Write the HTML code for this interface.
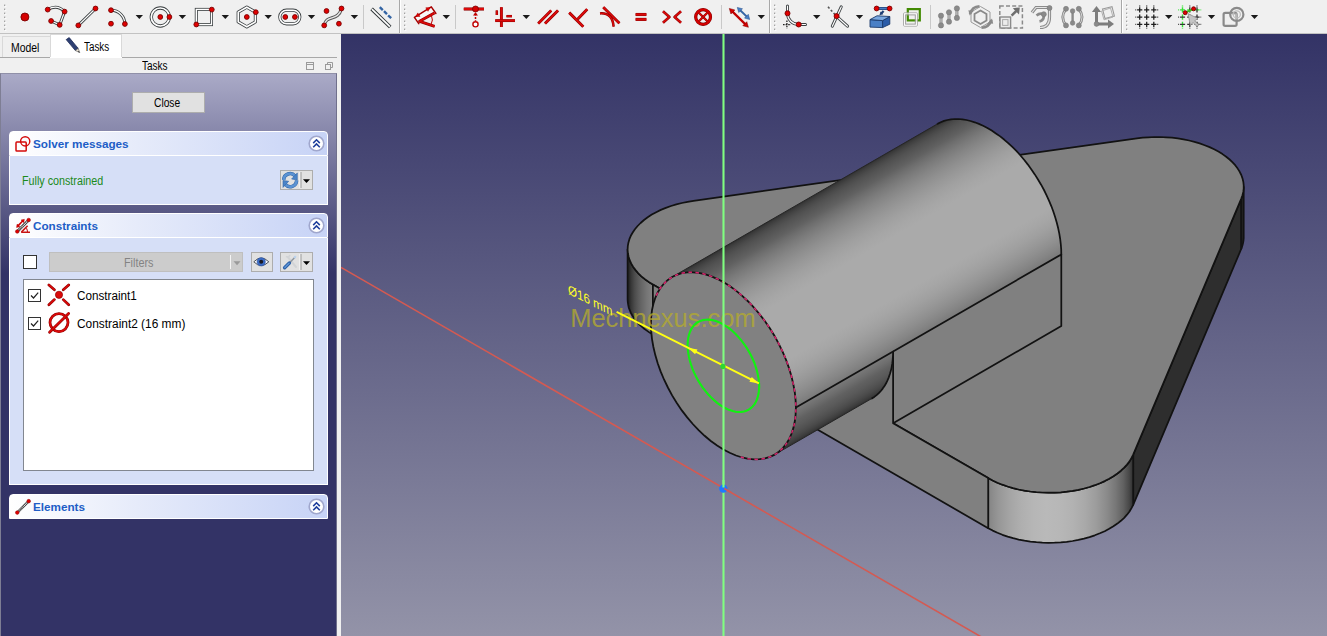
<!DOCTYPE html><html><head><meta charset="utf-8"><title>FreeCAD</title><style>
html,body{margin:0;padding:0;}
body{width:1327px;height:636px;overflow:hidden;background:#f0f0f0;font-family:"Liberation Sans",sans-serif;font-size:11px;color:#000;position:relative;}
.abs{position:absolute;}
#toolbar{left:0;top:0;width:1327px;height:34px;background:#f0f0f0;border-bottom:1px solid #c2c2c2;box-sizing:border-box;}
#tbsvg{left:0;top:0;}
#view{left:341px;top:34px;width:986px;height:602px;background:linear-gradient(#333366,#9393a8);overflow:hidden;}
#left{left:0;top:34px;width:341px;height:602px;background:#f0f0f0;}
.tab{position:absolute;box-sizing:border-box;border:1px solid #d9d9d9;border-bottom:none;font-size:12px;}
#tabline{left:0;top:23px;width:337px;height:1px;background:#a8a8a8;}
#panel{left:0;top:39px;width:337px;height:563px;background:linear-gradient(#aaaac7,#333366 35.5%,#333366);box-sizing:border-box;border-left:1px solid #7e7e94;border-right:1px solid #70708c;border-top:1px solid #9090a8;}
.hdr{position:absolute;left:9px;width:319px;height:25px;box-sizing:border-box;border:1px solid #fff;background:linear-gradient(90deg,#ffffff,#e6ebfa 40%,#c7d3f6);border-radius:4px 4px 0 0;font-weight:bold;color:#215dc6;font-size:11.5px;}
.hdr span{position:absolute;left:24px;top:6px;letter-spacing:-0.1px;white-space:nowrap;}
.body{position:absolute;left:9px;width:319px;box-sizing:border-box;background:#d6dff7;border:1px solid #ffffff;border-top:none;}
.btn{position:absolute;box-sizing:border-box;background:#e1e1e1;border:1px solid #adadad;}
.t{position:absolute;white-space:nowrap;line-height:12px;transform-origin:0 0;display:block;}
.chev{position:absolute;right:2px;top:3px;}
</style></head><body>
<div id="toolbar" class="abs"></div>
<svg id="tbsvg" class="abs" width="1327" height="33" viewBox="0 0 1327 33"><rect x="4.0" y="4.6" width="1.3" height="1.3" fill="#9a9a9a"/><rect x="5.1" y="5.7" width="1.2" height="1.2" fill="#ffffff"/><rect x="4.0" y="8.6" width="1.3" height="1.3" fill="#9a9a9a"/><rect x="5.1" y="9.7" width="1.2" height="1.2" fill="#ffffff"/><rect x="4.0" y="12.6" width="1.3" height="1.3" fill="#9a9a9a"/><rect x="5.1" y="13.7" width="1.2" height="1.2" fill="#ffffff"/><rect x="4.0" y="16.6" width="1.3" height="1.3" fill="#9a9a9a"/><rect x="5.1" y="17.7" width="1.2" height="1.2" fill="#ffffff"/><rect x="4.0" y="20.6" width="1.3" height="1.3" fill="#9a9a9a"/><rect x="5.1" y="21.7" width="1.2" height="1.2" fill="#ffffff"/><rect x="4.0" y="24.6" width="1.3" height="1.3" fill="#9a9a9a"/><rect x="5.1" y="25.7" width="1.2" height="1.2" fill="#ffffff"/><rect x="4.0" y="28.6" width="1.3" height="1.3" fill="#9a9a9a"/><rect x="5.1" y="29.7" width="1.2" height="1.2" fill="#ffffff"/><circle cx="24.9" cy="17" r="4" fill="#d40000" stroke="#7a0000" stroke-width="0.9"/><path d="M47.7 9.6 Q57 4 64.6 11.6 L59.7 24.9 L51.1 21" fill="none" stroke="#3a3f41" stroke-width="3.0" stroke-linecap="round"/><path d="M47.7 9.6 Q57 4 64.6 11.6 L59.7 24.9 L51.1 21" fill="none" stroke="#ffffff" stroke-width="1.2" stroke-linecap="round"/><circle cx="47.7" cy="9.6" r="2.4" fill="#e00000" stroke="#7a0000" stroke-width="0.9"/><circle cx="64.6" cy="11.6" r="2.4" fill="#e00000" stroke="#7a0000" stroke-width="0.9"/><circle cx="59.7" cy="24.9" r="2.4" fill="#e00000" stroke="#7a0000" stroke-width="0.9"/><circle cx="51.1" cy="21.0" r="2.4" fill="#e00000" stroke="#7a0000" stroke-width="0.9"/><path d="M78.3 25.4 L95.5 8.5" fill="none" stroke="#3a3f41" stroke-width="3.0" stroke-linecap="round"/><path d="M78.3 25.4 L95.5 8.5" fill="none" stroke="#ffffff" stroke-width="1.2" stroke-linecap="round"/><circle cx="78.3" cy="25.4" r="2.4" fill="#e00000" stroke="#7a0000" stroke-width="0.9"/><circle cx="95.5" cy="8.5" r="2.4" fill="#e00000" stroke="#7a0000" stroke-width="0.9"/><path d="M111 10.2 A13.8 13.8 0 0 1 124.9 24" fill="none" stroke="#3a3f41" stroke-width="3.0" stroke-linecap="round"/><path d="M111 10.2 A13.8 13.8 0 0 1 124.9 24" fill="none" stroke="#ffffff" stroke-width="1.2" stroke-linecap="round"/><circle cx="111.0" cy="10.2" r="2.4" fill="#e00000" stroke="#7a0000" stroke-width="0.9"/><circle cx="124.9" cy="24.0" r="2.4" fill="#e00000" stroke="#7a0000" stroke-width="0.9"/><circle cx="111.0" cy="23.7" r="2.4" fill="#e00000" stroke="#7a0000" stroke-width="0.9"/><path d="M135.6 15.0 h7.4 l-3.7 4 Z" fill="#1a1a1a"/><circle cx="160.3" cy="17" r="9" fill="none" stroke="#3a3f41" stroke-width="3.3"/><circle cx="160.3" cy="17" r="9" fill="none" stroke="#fff" stroke-width="1.7"/><circle cx="160.3" cy="17.0" r="2.4" fill="#e00000" stroke="#7a0000" stroke-width="0.9"/><circle cx="169.4" cy="17.0" r="2.4" fill="#e00000" stroke="#7a0000" stroke-width="0.9"/><path d="M178.7 15.0 h7.4 l-3.7 4 Z" fill="#1a1a1a"/><rect x="196.3" y="9.4" width="15.2" height="15.2" fill="none" stroke="#3a3f41" stroke-width="3"/><rect x="196.3" y="9.4" width="15.2" height="15.2" fill="none" stroke="#fff" stroke-width="1.4"/><circle cx="211.8" cy="9.6" r="2.4" fill="#e00000" stroke="#7a0000" stroke-width="0.9"/><circle cx="196.3" cy="24.5" r="2.4" fill="#e00000" stroke="#7a0000" stroke-width="0.9"/><path d="M221.6 15.0 h7.4 l-3.7 4 Z" fill="#1a1a1a"/><path d="M246.8 7.2 L255.4 12.1 L255.4 21.9 L246.8 26.8 L238.2 21.9 L238.2 12.1 Z" fill="none" stroke="#3a3f41" stroke-width="3.2" stroke-linejoin="round"/><path d="M246.8 7.2 L255.4 12.1 L255.4 21.9 L246.8 26.8 L238.2 21.9 L238.2 12.1 Z" fill="none" stroke="#fff" stroke-width="1.6"/><circle cx="246.8" cy="17.0" r="2.4" fill="#e00000" stroke="#7a0000" stroke-width="0.9"/><circle cx="255.8" cy="12.2" r="2.4" fill="#e00000" stroke="#7a0000" stroke-width="0.9"/><path d="M264.5 15.0 h7.4 l-3.7 4 Z" fill="#1a1a1a"/><rect x="279.8" y="10.2" width="20" height="13.6" rx="6.8" fill="none" stroke="#3a3f41" stroke-width="3.2"/><rect x="279.8" y="10.2" width="20" height="13.6" rx="6.8" fill="none" stroke="#fff" stroke-width="1.6"/><circle cx="285.3" cy="17.0" r="2.4" fill="#e00000" stroke="#7a0000" stroke-width="0.9"/><circle cx="294.9" cy="17.0" r="2.4" fill="#e00000" stroke="#7a0000" stroke-width="0.9"/><path d="M307.8 15.0 h7.4 l-3.7 4 Z" fill="#1a1a1a"/><path d="M324.2 25.4 C326 14 338 22 341.5 8.5" fill="none" stroke="#555" stroke-width="3.2" stroke-linecap="round"/><path d="M324.2 25.4 C326 14 338 22 341.5 8.5" fill="none" stroke="#e8e8e8" stroke-width="1.3"/><circle cx="326.5" cy="11.0" r="2.4" fill="#e00000" stroke="#7a0000" stroke-width="0.9"/><circle cx="341.5" cy="8.5" r="2.4" fill="#e00000" stroke="#7a0000" stroke-width="0.9"/><circle cx="324.2" cy="25.4" r="2.4" fill="#e00000" stroke="#7a0000" stroke-width="0.9"/><circle cx="338.9" cy="23.7" r="2.4" fill="#e00000" stroke="#7a0000" stroke-width="0.9"/><path d="M350.7 15.0 h7.4 l-3.7 4 Z" fill="#1a1a1a"/><rect x="363.0" y="5" width="1" height="24" fill="#c9c9c9"/><path d="M371.6 8.9 L390.2 27" stroke="#2e3436" stroke-width="3.6" fill="none"/><path d="M371.9 9.2 L389.9 26.7" stroke="#fff" stroke-width="1.7" fill="none"/><path d="M379.8 7.2 L392 19" stroke="#3465a4" stroke-width="2.4" stroke-dasharray="4.2 1.6" fill="none"/><rect x="399.0" y="0" width="1" height="33" fill="#a8a8a8"/><rect x="400.0" y="0" width="1" height="33" fill="#ffffff"/><rect x="404.0" y="4.6" width="1.3" height="1.3" fill="#9a9a9a"/><rect x="405.1" y="5.7" width="1.2" height="1.2" fill="#ffffff"/><rect x="404.0" y="8.6" width="1.3" height="1.3" fill="#9a9a9a"/><rect x="405.1" y="9.7" width="1.2" height="1.2" fill="#ffffff"/><rect x="404.0" y="12.6" width="1.3" height="1.3" fill="#9a9a9a"/><rect x="405.1" y="13.7" width="1.2" height="1.2" fill="#ffffff"/><rect x="404.0" y="16.6" width="1.3" height="1.3" fill="#9a9a9a"/><rect x="405.1" y="17.7" width="1.2" height="1.2" fill="#ffffff"/><rect x="404.0" y="20.6" width="1.3" height="1.3" fill="#9a9a9a"/><rect x="405.1" y="21.7" width="1.2" height="1.2" fill="#ffffff"/><rect x="404.0" y="24.6" width="1.3" height="1.3" fill="#9a9a9a"/><rect x="405.1" y="25.7" width="1.2" height="1.2" fill="#ffffff"/><rect x="404.0" y="28.6" width="1.3" height="1.3" fill="#9a9a9a"/><rect x="405.1" y="29.7" width="1.2" height="1.2" fill="#ffffff"/><path d="M414.4 17.3 L431.3 6.9 L435.8 13.3 L418.6 23.5 Z" fill="#f8f8f8"/><path d="M418.8 23.7 L414.4 17.3 L431.3 6.9 L435.9 13.5" fill="none" stroke="#a80000" stroke-width="1.5" stroke-linejoin="round" stroke-linecap="round"/><path d="M415.6 16.6 l4.4 -0.2 l-2.2 -3.5 Z M430.2 7.6 l-4.4 0.2 l2.2 3.5 Z" fill="#e00000" stroke="#a80000" stroke-width="0.5"/><path d="M434.4 13 L419.6 21.3 L434.6 26.4" fill="none" stroke="#8e0000" stroke-width="2.8" stroke-linecap="butt" stroke-linejoin="round"/><path d="M434.4 13 L419.6 21.3 L434.6 26.4" fill="none" stroke="#dc0a0a" stroke-width="1.7" stroke-linecap="butt" stroke-linejoin="round"/><path d="M431.4 15.4 Q433.6 20 431 24.6" stroke="#c00000" stroke-width="1" fill="none"/><path d="M442.6 15.0 h7.4 l-3.7 4 Z" fill="#1a1a1a"/><rect x="455.0" y="5" width="1" height="24" fill="#c9c9c9"/><path d="M463.8 9 H484" fill="none" stroke="#8e0000" stroke-width="3.1" stroke-linecap="butt" stroke-linejoin="round"/><path d="M463.8 9 H484" fill="none" stroke="#dc0a0a" stroke-width="2.0" stroke-linecap="butt" stroke-linejoin="round"/><circle cx="475.5" cy="9" r="3" fill="#d40000" stroke="#7a0000" stroke-width="0.8"/><path d="M475.5 13.5 V21" stroke="#c00000" stroke-width="1.5" stroke-dasharray="2 1.4" fill="none"/><path d="M473 15.5 L475.5 12.2 L478 15.5 Z" fill="#c00000"/><circle cx="475.5" cy="24.3" r="2.6" fill="#fff" stroke="#c00000" stroke-width="1.4"/><path d="M501.4 7.2 V27" fill="none" stroke="#8e0000" stroke-width="2.9" stroke-linecap="butt" stroke-linejoin="round"/><path d="M501.4 7.2 V27" fill="none" stroke="#dc0a0a" stroke-width="1.8" stroke-linecap="butt" stroke-linejoin="round"/><path d="M495.2 20.6 H515" fill="none" stroke="#8e0000" stroke-width="2.9" stroke-linecap="butt" stroke-linejoin="round"/><path d="M495.2 20.6 H515" fill="none" stroke="#dc0a0a" stroke-width="1.8" stroke-linecap="butt" stroke-linejoin="round"/><path d="M496.8 10.4 V15" fill="none" stroke="#8e0000" stroke-width="2.5" stroke-linecap="butt" stroke-linejoin="round"/><path d="M496.8 10.4 V15" fill="none" stroke="#dc0a0a" stroke-width="1.4" stroke-linecap="butt" stroke-linejoin="round"/><path d="M506.4 16.2 H512" fill="none" stroke="#8e0000" stroke-width="2.5" stroke-linecap="butt" stroke-linejoin="round"/><path d="M506.4 16.2 H512" fill="none" stroke="#dc0a0a" stroke-width="1.4" stroke-linecap="butt" stroke-linejoin="round"/><path d="M522.6 15.0 h7.4 l-3.7 4 Z" fill="#1a1a1a"/><path d="M538.2 23.6 L551.2 10.4" fill="none" stroke="#8e0000" stroke-width="2.9" stroke-linecap="butt" stroke-linejoin="round"/><path d="M538.2 23.6 L551.2 10.4" fill="none" stroke="#dc0a0a" stroke-width="1.8" stroke-linecap="butt" stroke-linejoin="round"/><path d="M545 23.6 L558 10.4" fill="none" stroke="#8e0000" stroke-width="2.9" stroke-linecap="butt" stroke-linejoin="round"/><path d="M545 23.6 L558 10.4" fill="none" stroke="#dc0a0a" stroke-width="1.8" stroke-linecap="butt" stroke-linejoin="round"/><path d="M569.2 12.6 L583.3 26.7" fill="none" stroke="#8e0000" stroke-width="2.9" stroke-linecap="butt" stroke-linejoin="round"/><path d="M569.2 12.6 L583.3 26.7" fill="none" stroke="#dc0a0a" stroke-width="1.8" stroke-linecap="butt" stroke-linejoin="round"/><path d="M577.6 19.2 L587.2 9.2" fill="none" stroke="#8e0000" stroke-width="2.9" stroke-linecap="butt" stroke-linejoin="round"/><path d="M577.6 19.2 L587.2 9.2" fill="none" stroke="#dc0a0a" stroke-width="1.8" stroke-linecap="butt" stroke-linejoin="round"/><path d="M603.3 7.2 L619.4 23.3" fill="none" stroke="#8e0000" stroke-width="2.9" stroke-linecap="butt" stroke-linejoin="round"/><path d="M603.3 7.2 L619.4 23.3" fill="none" stroke="#dc0a0a" stroke-width="1.8" stroke-linecap="butt" stroke-linejoin="round"/><path d="M600 13.4 Q612.5 12.5 613.6 26.6" fill="none" stroke="#8e0000" stroke-width="2.5" stroke-linecap="butt" stroke-linejoin="round"/><path d="M600 13.4 Q612.5 12.5 613.6 26.6" fill="none" stroke="#dc0a0a" stroke-width="1.4" stroke-linecap="butt" stroke-linejoin="round"/><path d="M635.6 14.5 H646.4" fill="none" stroke="#8e0000" stroke-width="3.1" stroke-linecap="butt" stroke-linejoin="round"/><path d="M635.6 14.5 H646.4" fill="none" stroke="#dc0a0a" stroke-width="2.0" stroke-linecap="butt" stroke-linejoin="round"/><path d="M635.6 19.4 H646.4" fill="none" stroke="#8e0000" stroke-width="3.1" stroke-linecap="butt" stroke-linejoin="round"/><path d="M635.6 19.4 H646.4" fill="none" stroke="#dc0a0a" stroke-width="2.0" stroke-linecap="butt" stroke-linejoin="round"/><path d="M663 11.3 L669.4 17 L663 22.7" fill="none" stroke="#8e0000" stroke-width="2.7" stroke-linecap="butt" stroke-linejoin="round"/><path d="M663 11.3 L669.4 17 L663 22.7" fill="none" stroke="#dc0a0a" stroke-width="1.6" stroke-linecap="butt" stroke-linejoin="round"/><path d="M681 11.3 L674.6 17 L681 22.7" fill="none" stroke="#8e0000" stroke-width="2.7" stroke-linecap="butt" stroke-linejoin="round"/><path d="M681 11.3 L674.6 17 L681 22.7" fill="none" stroke="#dc0a0a" stroke-width="1.6" stroke-linecap="butt" stroke-linejoin="round"/><circle cx="703.1" cy="17" r="7.4" fill="none" stroke="#7a0000" stroke-width="3.2"/><circle cx="703.1" cy="17" r="7.4" fill="none" stroke="#d40000" stroke-width="2.2"/><path d="M698.6 12.5 L707.6 21.5" fill="none" stroke="#8e0000" stroke-width="2.3" stroke-linecap="butt" stroke-linejoin="round"/><path d="M698.6 12.5 L707.6 21.5" fill="none" stroke="#dc0a0a" stroke-width="1.2" stroke-linecap="butt" stroke-linejoin="round"/><path d="M707.6 12.5 L698.6 21.5" fill="none" stroke="#8e0000" stroke-width="2.3" stroke-linecap="butt" stroke-linejoin="round"/><path d="M707.6 12.5 L698.6 21.5" fill="none" stroke="#dc0a0a" stroke-width="1.2" stroke-linecap="butt" stroke-linejoin="round"/><rect x="721.0" y="5" width="1" height="24" fill="#c9c9c9"/><path d="M731.5 10.6 L746.2 25.1" stroke="#c00000" stroke-width="2.2" fill="none"/><path d="M729.3 8.4 l5.6 1.6 l-4 4 Z M748.4 27.3 l-5.6 -1.6 l4 -4 Z" fill="#d40000" stroke="#7a0000" stroke-width="0.5"/><path d="M739.4 9.5 L747.6 17.4" stroke="#3465a4" stroke-width="2" fill="none"/><path d="M737.3 7.4 l5.2 1.4 l-3.8 3.8 Z M749.7 19.5 l-5.2 -1.4 l3.8 -3.8 Z" fill="#4a7fc4" stroke="#204a87" stroke-width="0.5"/><path d="M757.6 15.0 h7.4 l-3.7 4 Z" fill="#1a1a1a"/><rect x="769.0" y="0" width="1" height="33" fill="#a8a8a8"/><rect x="770.0" y="0" width="1" height="33" fill="#ffffff"/><rect x="774.0" y="4.6" width="1.3" height="1.3" fill="#9a9a9a"/><rect x="775.1" y="5.7" width="1.2" height="1.2" fill="#ffffff"/><rect x="774.0" y="8.6" width="1.3" height="1.3" fill="#9a9a9a"/><rect x="775.1" y="9.7" width="1.2" height="1.2" fill="#ffffff"/><rect x="774.0" y="12.6" width="1.3" height="1.3" fill="#9a9a9a"/><rect x="775.1" y="13.7" width="1.2" height="1.2" fill="#ffffff"/><rect x="774.0" y="16.6" width="1.3" height="1.3" fill="#9a9a9a"/><rect x="775.1" y="17.7" width="1.2" height="1.2" fill="#ffffff"/><rect x="774.0" y="20.6" width="1.3" height="1.3" fill="#9a9a9a"/><rect x="775.1" y="21.7" width="1.2" height="1.2" fill="#ffffff"/><rect x="774.0" y="24.6" width="1.3" height="1.3" fill="#9a9a9a"/><rect x="775.1" y="25.7" width="1.2" height="1.2" fill="#ffffff"/><rect x="774.0" y="28.6" width="1.3" height="1.3" fill="#9a9a9a"/><rect x="775.1" y="29.7" width="1.2" height="1.2" fill="#ffffff"/><path d="M787.5 6 V12" fill="none" stroke="#3a3f41" stroke-width="3.0" stroke-linecap="round"/><path d="M787.5 6 V12" fill="none" stroke="#ffffff" stroke-width="1.2" stroke-linecap="round"/><path d="M787.5 13.3 A11.2 11.2 0 0 0 798.7 24.5" fill="none" stroke="#3a3f41" stroke-width="3.0" stroke-linecap="round"/><path d="M787.5 13.3 A11.2 11.2 0 0 0 798.7 24.5" fill="none" stroke="#ffffff" stroke-width="1.2" stroke-linecap="round"/><path d="M799 24.5 H805.5" fill="none" stroke="#3a3f41" stroke-width="3.0" stroke-linecap="round"/><path d="M799 24.5 H805.5" fill="none" stroke="#ffffff" stroke-width="1.2" stroke-linecap="round"/><circle cx="787.5" cy="13.3" r="2.5" fill="#e00000" stroke="#7a0000" stroke-width="0.9"/><circle cx="798.7" cy="24.5" r="2.5" fill="#e00000" stroke="#7a0000" stroke-width="0.9"/><path d="M786.9 20.5 V28.5 M783 24.7 H791" stroke="#222" stroke-width="1.3" stroke-dasharray="1.6 1" fill="none"/><path d="M813.0 15.0 h7.4 l-3.7 4 Z" fill="#1a1a1a"/><path d="M841.2 6.9 L832.3 26.2" fill="none" stroke="#3a3f41" stroke-width="3.0" stroke-linecap="round"/><path d="M841.2 6.9 L832.3 26.2" fill="none" stroke="#ffffff" stroke-width="1.2" stroke-linecap="round"/><path d="M836.6 16.3 L847.5 26.2" fill="none" stroke="#3a3f41" stroke-width="3.0" stroke-linecap="round"/><path d="M836.6 16.3 L847.5 26.2" fill="none" stroke="#ffffff" stroke-width="1.2" stroke-linecap="round"/><path d="M828 6.8 L835 14.6" stroke="#555" stroke-width="1.6" stroke-dasharray="2.2 2" fill="none"/><circle cx="836.6" cy="16.1" r="2.5" fill="#e00000" stroke="#7a0000" stroke-width="0.9"/><path d="M855.8 15.0 h7.4 l-3.7 4 Z" fill="#1a1a1a"/><path d="M870 19.6 L882.6 20.6 L882.6 27.6 L870 27.1 Z" fill="#4a80c6" stroke="#1b3a6b" stroke-width="0.9" stroke-linejoin="round"/><path d="M882.6 20.6 L889.8 16.5 L889.8 24.2 L882.6 27.6 Z" fill="#2a5ca8" stroke="#1b3a6b" stroke-width="0.9" stroke-linejoin="round"/><path d="M870 19.6 L877 15.8 L889.8 16.5 L882.6 20.6 Z" fill="#7aa8e0" stroke="#1b3a6b" stroke-width="0.9" stroke-linejoin="round"/><path d="M877 8.5 H889.4" stroke="#1f3f75" stroke-width="3"/><path d="M877 8.5 H889.4" stroke="#4a7cc0" stroke-width="1.6"/><path d="M883.6 11 L881.2 13.6" stroke="#1f3f75" stroke-width="2.2"/><path d="M879.4 15.2 l1.2 -3.6 l2.8 2.6 Z" fill="#1f3f75"/><circle cx="876.6" cy="8.5" r="2.4" fill="#e00000" stroke="#7a0000" stroke-width="0.9"/><circle cx="889.6" cy="8.5" r="2.4" fill="#e00000" stroke="#7a0000" stroke-width="0.9"/><rect x="907.8" y="9.1" width="12" height="11.3" fill="none" stroke="#428a02" stroke-width="2.2"/><rect x="903.6" y="12.9" width="13.7" height="13.2" rx="0.8" fill="none" stroke="#a6a6a6" stroke-width="1"/><rect x="904.6" y="13.9" width="11.7" height="11.2" fill="none" stroke="#ffffff" stroke-width="1"/><rect x="905.6" y="14.9" width="9.7" height="9.2" fill="none" stroke="#a0a0a0" stroke-width="1"/><rect x="930.0" y="5" width="1" height="24" fill="#c9c9c9"/><path d="M941.0 15.7 V25.4" stroke="#8a8a8a" stroke-width="3" fill="none"/><path d="M941.0 15.7 V25.4" stroke="#cfcfcf" stroke-width="1" fill="none"/><circle cx="941.0" cy="15.7" r="2.6" fill="#8a8a8a" stroke="#7a7a7a" stroke-width="0.6"/><circle cx="941.0" cy="25.4" r="2.6" fill="#8a8a8a" stroke="#7a7a7a" stroke-width="0.6"/><path d="M949.0 12.3 V21.7" stroke="#8a8a8a" stroke-width="3" fill="none"/><path d="M949.0 12.3 V21.7" stroke="#cfcfcf" stroke-width="1" fill="none"/><circle cx="949.0" cy="12.3" r="2.6" fill="#8a8a8a" stroke="#7a7a7a" stroke-width="0.6"/><circle cx="949.0" cy="21.7" r="2.6" fill="#8a8a8a" stroke="#7a7a7a" stroke-width="0.6"/><path d="M956.9 8.4 V17.9" stroke="#8a8a8a" stroke-width="3" fill="none"/><path d="M956.9 8.4 V17.9" stroke="#cfcfcf" stroke-width="1" fill="none"/><circle cx="956.9" cy="8.4" r="2.6" fill="#8a8a8a" stroke="#7a7a7a" stroke-width="0.6"/><circle cx="956.9" cy="17.9" r="2.6" fill="#8a8a8a" stroke="#7a7a7a" stroke-width="0.6"/><path d="M980.5 6.5 L990 12 L990 22 L980.5 27.5 L971 22 L971 12 Z" fill="none" stroke="#9a9a9a" stroke-width="1"/><path d="M980.5 10.5 L986.5 14 L986.5 20.5 L980.5 24 L974.5 20.5 L974.5 14 Z" fill="none" stroke="#8a8a8a" stroke-width="1.8"/><path d="M970 14 Q972 6.5 979.5 6.2" fill="none" stroke="#8a8a8a" stroke-width="2.6"/><path d="M968.4 10.2 l5.2 0.8 l-4 4.4 Z" fill="#8a8a8a"/><path d="M991.5 20 Q989 27.5 981.5 27.8" fill="none" stroke="#8a8a8a" stroke-width="2.6"/><path d="M993.2 23.8 l-5.2 -0.8 l4 -4.4 Z" fill="#8a8a8a"/><rect x="999.8" y="5.9" width="22.6" height="22.2" fill="none" stroke="#8a8a8a" stroke-width="1.5" stroke-dasharray="4 2.2"/><rect x="1000" y="17" width="10.6" height="11" fill="#ececec" stroke="#8a8a8a" stroke-width="1.4"/><rect x="1002.6" y="19.6" width="5.4" height="5.8" fill="none" stroke="#a8a8a8" stroke-width="1"/><path d="M1011.6 15.6 L1016.4 10.8" stroke="#6e6e6e" stroke-width="2.6"/><path d="M1019.8 7.4 l-7 0.8 l6.2 6.2 Z" fill="#6e6e6e"/><path d="M1032 12.5 L1036 7.5 H1049.5 V17 Q1049.5 27.5 1040 27.5" fill="none" stroke="#8a8a8a" stroke-width="3.2"/><path d="M1032 12.5 L1036 7.5 H1049.5 V17 Q1049.5 27.5 1040 27.5" fill="none" stroke="#e4e4e4" stroke-width="1.2"/><path d="M1036.5 15.5 Q1040 12.5 1043.6 14.4 Q1044.5 20.5 1039.5 21.4" fill="none" stroke="#8a8a8a" stroke-width="2.6"/><circle cx="1049.5" cy="8.0" r="2.5" fill="#8a8a8a" stroke="#7a7a7a" stroke-width="0.6"/><circle cx="1043.8" cy="14.2" r="2.5" fill="#8a8a8a" stroke="#7a7a7a" stroke-width="0.6"/><path d="M1066 9 Q1059.5 17 1066 25.5" fill="none" stroke="#8a8a8a" stroke-width="2.8"/><path d="M1078.8 9 Q1085.3 17 1078.8 25.5" fill="none" stroke="#8a8a8a" stroke-width="2.8"/><path d="M1066 9 Q1059.5 17 1066 25.5 M1078.8 9 Q1085.3 17 1078.8 25.5" fill="none" stroke="#dcdcdc" stroke-width="0.9"/><path d="M1072.6 11 V23" stroke="#8a8a8a" stroke-width="2.4"/><circle cx="1066.0" cy="8.8" r="2.5" fill="#8a8a8a" stroke="#7a7a7a" stroke-width="0.6"/><circle cx="1066.0" cy="25.4" r="2.5" fill="#8a8a8a" stroke="#7a7a7a" stroke-width="0.6"/><circle cx="1078.8" cy="8.8" r="2.5" fill="#8a8a8a" stroke="#7a7a7a" stroke-width="0.6"/><circle cx="1078.8" cy="25.4" r="2.5" fill="#8a8a8a" stroke="#7a7a7a" stroke-width="0.6"/><circle cx="1072.6" cy="11.0" r="2.3" fill="#8a8a8a" stroke="#7a7a7a" stroke-width="0.6"/><circle cx="1072.6" cy="23.0" r="2.3" fill="#8a8a8a" stroke="#7a7a7a" stroke-width="0.6"/><path d="M1096.5 24 V11" stroke="#7d7d7d" stroke-width="3"/><path d="M1096.5 6 l4.6 6 h-9.2 Z" fill="#7d7d7d"/><path d="M1096.5 24 H1108" stroke="#7d7d7d" stroke-width="3"/><path d="M1114 24 l-6 4.6 v-9.2 Z" fill="#7d7d7d"/><path d="M1102.5 9 L1112 6.6 L1114.4 16 L1105 18.6 Z" fill="none" stroke="#9a9a9a" stroke-width="1.1"/><path d="M1101.5 11 L1110.5 8 L1113 17 L1104 19.8 Z" fill="none" stroke="#b0b0b0" stroke-width="1"/><circle cx="1096.5" cy="24.0" r="2.4" fill="#8a8a8a" stroke="#7a7a7a" stroke-width="0.6"/><rect x="1121.0" y="0" width="1" height="33" fill="#a8a8a8"/><rect x="1122.0" y="0" width="1" height="33" fill="#ffffff"/><rect x="1126.0" y="4.6" width="1.3" height="1.3" fill="#9a9a9a"/><rect x="1127.1" y="5.7" width="1.2" height="1.2" fill="#ffffff"/><rect x="1126.0" y="8.6" width="1.3" height="1.3" fill="#9a9a9a"/><rect x="1127.1" y="9.7" width="1.2" height="1.2" fill="#ffffff"/><rect x="1126.0" y="12.6" width="1.3" height="1.3" fill="#9a9a9a"/><rect x="1127.1" y="13.7" width="1.2" height="1.2" fill="#ffffff"/><rect x="1126.0" y="16.6" width="1.3" height="1.3" fill="#9a9a9a"/><rect x="1127.1" y="17.7" width="1.2" height="1.2" fill="#ffffff"/><rect x="1126.0" y="20.6" width="1.3" height="1.3" fill="#9a9a9a"/><rect x="1127.1" y="21.7" width="1.2" height="1.2" fill="#ffffff"/><rect x="1126.0" y="24.6" width="1.3" height="1.3" fill="#9a9a9a"/><rect x="1127.1" y="25.7" width="1.2" height="1.2" fill="#ffffff"/><rect x="1126.0" y="28.6" width="1.3" height="1.3" fill="#9a9a9a"/><rect x="1127.1" y="29.7" width="1.2" height="1.2" fill="#ffffff"/><path d="M1139.7 5.6 V28.4" stroke="#1c1c1c" stroke-width="1.25" stroke-dasharray="0.8 0.9 5.2 2 5.2 2 5.2 0.8 0.7 9" fill="none"/><path d="M1146.7 5.6 V28.4" stroke="#1c1c1c" stroke-width="1.25" stroke-dasharray="0.8 0.9 5.2 2 5.2 2 5.2 0.8 0.7 9" fill="none"/><path d="M1153.8 5.6 V28.4" stroke="#1c1c1c" stroke-width="1.25" stroke-dasharray="0.8 0.9 5.2 2 5.2 2 5.2 0.8 0.7 9" fill="none"/><path d="M1135.4 9.9 H1158.2" stroke="#1c1c1c" stroke-width="1.25" stroke-dasharray="0.8 0.9 5.2 1.8 5.2 1.9 5.2 0.9 0.9 9" fill="none"/><path d="M1135.4 17.1 H1158.2" stroke="#1c1c1c" stroke-width="1.25" stroke-dasharray="0.8 0.9 5.2 1.8 5.2 1.9 5.2 0.9 0.9 9" fill="none"/><path d="M1135.4 24.3 H1158.2" stroke="#1c1c1c" stroke-width="1.25" stroke-dasharray="0.8 0.9 5.2 1.8 5.2 1.9 5.2 0.9 0.9 9" fill="none"/><path d="M1165.0 15.0 h7.4 l-3.7 4 Z" fill="#1a1a1a"/><path d="M1182.5 5.6 V28.4" stroke="#35e435" stroke-width="1.4" stroke-dasharray="0.8 0.9 5.2 2 5.2 2 5.2 0.8 0.7 9" fill="none"/><path d="M1178.2 9.9 H1201.2" stroke="#35e435" stroke-width="1.4" stroke-dasharray="0.8 0.9 5.2 2.1 5.2 2 5.2 0.9 0.8 9" fill="none"/><path d="M1189.8 5.6 V28.4" stroke="#333" stroke-width="1.3" stroke-dasharray="0.8 0.9 5.2 2 5.2 2 5.2 0.8 0.7 9" fill="none"/><path d="M1197.0 5.6 V28.4" stroke="#333" stroke-width="1.3" stroke-dasharray="0.8 0.9 5.2 2 5.2 2 5.2 0.8 0.7 9" fill="none"/><path d="M1178.2 17.1 H1201.2" stroke="#333" stroke-width="1.3" stroke-dasharray="0.8 0.9 5.2 2.1 5.2 2 5.2 0.9 0.8 9" fill="none"/><path d="M1178.2 24.3 H1201.2" stroke="#333" stroke-width="1.3" stroke-dasharray="0.8 0.9 5.2 2.1 5.2 2 5.2 0.9 0.8 9" fill="none"/><path d="M1188 13.6 L1190.4 25.6 L1193 22.4 L1197 26.6 L1198.8 24.8 L1194.6 20.8 L1198 18.6 Z" fill="#c4c4c4" stroke="#8e8e8e" stroke-width="0.8"/><path d="M1185.2 12.7 L1193.6 8.8" stroke="#3fbf1f" stroke-width="2"/><circle cx="1185.2" cy="12.7" r="2.0" fill="#e00000" stroke="#7a0000" stroke-width="0.9"/><circle cx="1193.6" cy="8.8" r="2.0" fill="#e00000" stroke="#7a0000" stroke-width="0.9"/><path d="M1207.8 15.0 h7.4 l-3.7 4 Z" fill="#1a1a1a"/><rect x="1223.6" y="12.8" width="13" height="13" rx="1.6" fill="none" stroke="#8a8a8a" stroke-width="2.2"/><circle cx="1236.8" cy="14.4" r="6.6" fill="none" stroke="#8a8a8a" stroke-width="2.2"/><path d="M1231.5 14 H1236.5 V19.5" fill="none" stroke="#b5b5b5" stroke-width="1.2"/><circle cx="1236.8" cy="14.4" r="3.6" fill="none" stroke="#bdbdbd" stroke-width="1.2"/><path d="M1250.8 15.0 h7.4 l-3.7 4 Z" fill="#1a1a1a"/></svg>
<div id="left" class="abs">
<div class="tab" style="left:2px;top:2px;width:49px;height:21px;background:#f0f0f0;"></div>
<div class="tab" style="left:50px;top:0;width:72px;height:24px;background:#fff;"><svg class="abs" style="left:12px;top:1px" width="20" height="20" viewBox="0 0 20 20"><path d="M3.2 3.6 L6.2 1.6 L15.2 12.4 L12.4 14.6 Z" fill="#2d3f73" stroke="#1d2a55" stroke-width="0.8"/><path d="M12.4 14.6 L15.2 12.4 L16.8 16.6 Z" fill="#e8e0d0" stroke="#555" stroke-width="0.6"/><path d="M15.6 15 L16.8 16.6 L14.9 15.9 Z" fill="#222"/></svg></div>
<div id="tabline" class="abs"></div><div class="abs" style="left:50px;top:23px;width:72px;height:1px;background:#fff"></div>
<svg class="abs" style="left:300px;top:24px" width="40" height="14" viewBox="0 0 40 14"><g fill="none" stroke="#9a9a9a" stroke-width="1"><rect x="6.5" y="4.5" width="7" height="7"/><path d="M6.5 6.5h7"/><rect x="25.5" y="6.5" width="5" height="5" fill="#f0f0f0"/><path d="M27.5 6.5v-2h5v5h-2"/></g></svg>
<div id="panel" class="abs">
<div class="btn" style="left:131px;top:18px;width:73px;height:21px;"></div>
<div class="hdr" style="left:8px;top:57px;"><svg class="abs" style="left:4px;top:2.6px" width="19" height="19" viewBox="0 0 19 19"><rect x="2" y="7.1" width="10.2" height="8.9" rx="0.8" fill="none" stroke="#d40a0a" stroke-width="1.5"/><circle cx="11.2" cy="6.35" r="4.6" fill="none" stroke="#d40a0a" stroke-width="1.4"/></svg><svg class="chev" width="17" height="17" viewBox="0 0 17 17"><circle cx="8.5" cy="8.5" r="7.3" fill="#ffffff" stroke="#a0a7cd" stroke-width="1.6"/><path d="M5.2 8.1 L8.5 4.8 L11.8 8.1 M5.2 12.3 L8.5 9 L11.8 12.3" fill="none" stroke="#1f3f9c" stroke-width="1.6"/></svg></div>
<div class="body" style="left:8px;top:82px;height:49px;">
<div class="btn" style="left:270px;top:14px;width:33px;height:20px;"><svg class="abs" style="left:0;top:0" width="31" height="18" viewBox="0 0 31 18"><g><path d="M2.7 8.9 A6.4 6.4 0 0 1 14 4.9" fill="none" stroke="#2f64a6" stroke-width="3.5"/><path d="M2.7 8.9 A6.4 6.4 0 0 1 14 4.9" fill="none" stroke="#5b93d3" stroke-width="2.6"/><path d="M16.3 1.9 V8.9 L10.6 8 Z" fill="#4a84c8" stroke="#2f64a6" stroke-width="0.6" stroke-linejoin="round"/></g><g transform="rotate(180 9.15 9.15)"><path d="M2.7 8.9 A6.4 6.4 0 0 1 14 4.9" fill="none" stroke="#2f64a6" stroke-width="3.5"/><path d="M2.7 8.9 A6.4 6.4 0 0 1 14 4.9" fill="none" stroke="#5b93d3" stroke-width="2.6"/><path d="M16.3 1.9 V8.9 L10.6 8 Z" fill="#4a84c8" stroke="#2f64a6" stroke-width="0.6" stroke-linejoin="round"/></g><rect x="18.4" y="1" width="1" height="16" fill="#fafafa"/><rect x="19.5" y="1" width="1" height="16" fill="#9c9c9c"/><path d="M22 8.2 h7 l-3.5 3.8 Z" fill="#000"/></svg></div></div>
<div class="hdr" style="left:8px;top:139px;"><svg class="abs" style="left:4px;top:2.6px" width="19" height="19" viewBox="0 0 19 19"><path d="M3.25 14.5 L14.7 3" stroke="#333" stroke-width="2.6"/><path d="M3.25 14.5 L14.7 3" stroke="#fff" stroke-width="1.3" stroke-dasharray="0.9 0.7"/><path d="M4 8.9 L8.9 3.8" stroke="#d00000" stroke-width="1.6"/><path d="M2.5 10.5 l0.6 -3.4 l2.8 2.7 Z M10.4 2.3 l-0.6 3.4 l-2.8 -2.7 Z" fill="#e00000" stroke="#a00000" stroke-width="0.4"/><path d="M7.2 15.25 H16" stroke="#c81414" stroke-width="1.5"/><path d="M7.4 15.1 L13.6 8.8" stroke="#c81414" stroke-width="1.5"/><path d="M12.4 11.2 Q13.6 13 13.5 15" fill="none" stroke="#c81414" stroke-width="1.1"/><circle cx="3.25" cy="14.5" r="1.8" fill="#e00000" stroke="#900000" stroke-width="0.5"/><circle cx="14.7" cy="3" r="1.8" fill="#e00000" stroke="#900000" stroke-width="0.5"/></svg><svg class="chev" width="17" height="17" viewBox="0 0 17 17"><circle cx="8.5" cy="8.5" r="7.3" fill="#ffffff" stroke="#a0a7cd" stroke-width="1.6"/><path d="M5.2 8.1 L8.5 4.8 L11.8 8.1 M5.2 12.3 L8.5 9 L11.8 12.3" fill="none" stroke="#1f3f9c" stroke-width="1.6"/></svg></div>
<div class="body" style="left:8px;top:164px;height:247px;">
<div class="abs" style="left:13px;top:17px;width:14px;height:14px;box-sizing:border-box;border:1px solid #333;background:#fff;"></div>
<div class="abs" style="left:39px;top:14px;width:194px;height:20px;box-sizing:border-box;background:#cccccc;border:1px solid #bfbfbf;color:#838383;font-size:12px;"><div class="abs" style="left:180px;top:2px;width:1px;height:14px;background:#f4f4f4"></div><svg class="abs" style="left:183px;top:8px" width="8" height="5"><path d="M0.5 0.3 H7.5 L4 4.2 Z" fill="#9a9a9a"/></svg></div>
<div class="btn" style="left:241px;top:14px;width:22px;height:20px;"><svg class="abs" style="left:0;top:0" width="20" height="18" viewBox="0 0 20 18"><path d="M1.8 8.8 Q9.2 1.2 16.8 8.8 Q9.2 16.4 1.8 8.8 Z" fill="#fbfcff" stroke="#4d5258" stroke-width="1"/><circle cx="9.2" cy="8.8" r="4.1" fill="#3b6cc6" stroke="#2a4f9a" stroke-width="0.6"/><circle cx="9.2" cy="8.8" r="2" fill="#1a1a22"/></svg></div>
<div class="btn" style="left:270px;top:14px;width:33px;height:20px;"><svg class="abs" style="left:0;top:0" width="31" height="18" viewBox="0 0 31 18"><path d="M6.8 4 L15 14" stroke="#d2d4d6" stroke-width="2" stroke-linecap="round"/><path d="M5 3.4 a2.6 2.6 0 0 0 4 -1.6" fill="none" stroke="#d2d4d6" stroke-width="1.6"/><path d="M8.6 9.8 L14.2 4" stroke="#8e969e" stroke-width="1.5"/><path d="M13.2 5 L14.8 3.2" stroke="#b9d2ee" stroke-width="2"/><path d="M3.6 14.8 L8.4 10" stroke="#2b5fa8" stroke-width="3.4" stroke-linecap="round"/><path d="M3.8 14.4 L8 10.2" stroke="#5f96d6" stroke-width="1.4" stroke-linecap="round"/><rect x="18.4" y="1" width="1" height="16" fill="#fafafa"/><rect x="19.5" y="1" width="1" height="16" fill="#9c9c9c"/><path d="M22 8.2 h7 l-3.5 3.8 Z" fill="#000"/></svg></div>
<div class="abs" style="left:13px;top:41px;width:291px;height:192px;box-sizing:border-box;background:#fff;border:1px solid #828790;">
<div class="abs" style="left:4px;top:9px;width:13px;height:13px;box-sizing:border-box;border:1px solid #333;background:#fff;"><svg class="abs" style="left:0;top:0" width="11" height="11"><path d="M2 5.5 L4.5 8 L9.2 2.6" fill="none" stroke="#222" stroke-width="1.2"/></svg></div>
<div class="abs" style="left:23px;top:3px;"><svg width="24" height="24" viewBox="0 0 24 24"><path d="M1.9 1.9 L7.4 6.8 M21.7 1.9 L16.3 6.8 M1.9 21.8 L7.4 16.6 M21.7 21.8 L16.3 16.6" stroke="#8e0000" stroke-width="2.7" stroke-linecap="round"/><path d="M1.9 1.9 L7.4 6.8 M21.7 1.9 L16.3 6.8 M1.9 21.8 L7.4 16.6 M21.7 21.8 L16.3 16.6" stroke="#dc0a0a" stroke-width="1.5" stroke-linecap="round"/><circle cx="12" cy="11.8" r="3.6" fill="#dc0a0a" stroke="#8e0000" stroke-width="0.7"/></svg></div>
<div class="abs" style="left:4px;top:37px;width:13px;height:13px;box-sizing:border-box;border:1px solid #333;background:#fff;"><svg class="abs" style="left:0;top:0" width="11" height="11"><path d="M2 5.5 L4.5 8 L9.2 2.6" fill="none" stroke="#222" stroke-width="1.2"/></svg></div>
<div class="abs" style="left:23px;top:31px;"><svg width="24" height="24" viewBox="0 0 24 24"><circle cx="12" cy="11.6" r="9" fill="none" stroke="#8e0000" stroke-width="2.8"/><circle cx="12" cy="11.6" r="9" fill="none" stroke="#dc0a0a" stroke-width="1.7"/><path d="M2.6 21.2 L21.6 2.4" stroke="#8e0000" stroke-width="2.8" stroke-linecap="round"/><path d="M2.6 21.2 L21.6 2.4" stroke="#dc0a0a" stroke-width="1.7" stroke-linecap="round"/></svg></div>
</div>
</div>
<div class="hdr" style="left:8px;top:420px;"><svg class="abs" style="left:4px;top:2.6px" width="19" height="19" viewBox="0 0 19 19"><path d="M3.25 14.6 L14.7 3.15" stroke="#333" stroke-width="2.4"/><path d="M3.25 14.6 L14.7 3.15" stroke="#fff" stroke-width="1.2" stroke-dasharray="0.9 0.7"/><circle cx="3.25" cy="14.6" r="1.8" fill="#e00000" stroke="#900000" stroke-width="0.5"/><circle cx="14.7" cy="3.15" r="1.8" fill="#e00000" stroke="#900000" stroke-width="0.5"/></svg><svg class="chev" width="17" height="17" viewBox="0 0 17 17"><circle cx="8.5" cy="8.5" r="7.3" fill="#ffffff" stroke="#a0a7cd" stroke-width="1.6"/><path d="M5.2 8.1 L8.5 4.8 L11.8 8.1 M5.2 12.3 L8.5 9 L11.8 12.3" fill="none" stroke="#1f3f9c" stroke-width="1.6"/></svg></div>
</div>
</div>
<span id="t1" class="t" style="left:11.0px;top:41.64px;font-size:12px;color:#000;transform:scaleX(0.8688);">Model</span>
<span id="t2" class="t" style="left:84.0px;top:41.04px;font-size:12px;color:#000;transform:scaleX(0.8212);">Tasks</span>
<span id="t3" class="t" style="left:141.8px;top:59.74px;font-size:12px;color:#000;transform:scaleX(0.8342);">Tasks</span>
<span id="t4" class="t" style="left:154.1px;top:97.34px;font-size:12px;color:#000;transform:scaleX(0.8538);">Close</span>
<span id="t5" class="t" style="left:33.2px;top:138.22px;font-size:11.5px;font-weight:bold;color:#215dc6;transform:scaleX(1.0172);">Solver messages</span>
<span id="t6" class="t" style="left:22.2px;top:175.44px;font-size:12px;color:#1a8a1a;transform:scaleX(0.8951);">Fully constrained</span>
<span id="t7" class="t" style="left:33.2px;top:220.42px;font-size:11.5px;font-weight:bold;color:#215dc6;transform:scaleX(1.0156);">Constraints</span>
<span id="t8" class="t" style="left:124.1px;top:257.44px;font-size:12px;color:#838383;transform:scaleX(0.9029);">Filters</span>
<span id="t9" class="t" style="left:77.2px;top:290.44px;font-size:12px;color:#000;transform:scaleX(0.9743);">Constraint1</span>
<span id="t10" class="t" style="left:77.2px;top:318.44px;font-size:12px;color:#000;transform:scaleX(0.9911);">Constraint2 (16 mm)</span>
<span id="t11" class="t" style="left:33.2px;top:501.42px;font-size:11.5px;font-weight:bold;color:#215dc6;transform:scaleX(1.0168);">Elements</span>
<div class="abs" style="left:337px;top:34px;width:4px;height:602px;background:#f0f0f0;"></div>
<div id="view" class="abs"><svg class="abs" style="left:-341px;top:-34px" width="1327" height="636" viewBox="0 0 1327 636">
<defs><linearGradient id="gBR" gradientUnits="userSpaceOnUse" x1="988.2" y1="0" x2="1133.2" y2="0"><stop offset="0.000" stop-color="#848484"/><stop offset="0.068" stop-color="#969696"/><stop offset="0.145" stop-color="#a4a4a4"/><stop offset="0.227" stop-color="#afafaf"/><stop offset="0.314" stop-color="#b6b6b6"/><stop offset="0.404" stop-color="#b9b9b9"/><stop offset="0.494" stop-color="#b7b7b7"/><stop offset="0.582" stop-color="#b2b2b2"/><stop offset="0.667" stop-color="#a9a9a9"/><stop offset="0.745" stop-color="#9c9c9c"/><stop offset="0.817" stop-color="#8b8b8b"/><stop offset="0.880" stop-color="#777777"/><stop offset="0.932" stop-color="#616161"/><stop offset="0.972" stop-color="#484848"/><stop offset="1.000" stop-color="#2e2e2e"/></linearGradient><linearGradient id="gBL" gradientUnits="userSpaceOnUse" x1="627.6" y1="0" x2="652.9" y2="0"><stop offset="0.000" stop-color="#282828"/><stop offset="0.005" stop-color="#282828"/><stop offset="0.021" stop-color="#282828"/><stop offset="0.048" stop-color="#282828"/><stop offset="0.086" stop-color="#2c2c2c"/><stop offset="0.133" stop-color="#363636"/><stop offset="0.192" stop-color="#3f3f3f"/><stop offset="0.260" stop-color="#494949"/><stop offset="0.338" stop-color="#525252"/><stop offset="0.426" stop-color="#5b5b5b"/><stop offset="0.523" stop-color="#646464"/><stop offset="0.630" stop-color="#6c6c6c"/><stop offset="0.745" stop-color="#757575"/><stop offset="0.868" stop-color="#7c7c7c"/><stop offset="1.000" stop-color="#848484"/></linearGradient><linearGradient id="gAP" gradientUnits="userSpaceOnUse" x1="1241.3" y1="0" x2="1243.7" y2="0"><stop offset="0.000" stop-color="#2e2e2e"/><stop offset="0.137" stop-color="#2b2b2b"/><stop offset="0.264" stop-color="#282828"/><stop offset="0.382" stop-color="#282828"/><stop offset="0.489" stop-color="#282828"/><stop offset="0.586" stop-color="#282828"/><stop offset="0.672" stop-color="#282828"/><stop offset="0.749" stop-color="#282828"/><stop offset="0.816" stop-color="#282828"/><stop offset="0.872" stop-color="#282828"/><stop offset="0.918" stop-color="#282828"/><stop offset="0.954" stop-color="#282828"/><stop offset="0.979" stop-color="#282828"/><stop offset="0.995" stop-color="#282828"/><stop offset="1.000" stop-color="#282828"/></linearGradient><linearGradient id="gCyl" gradientUnits="userSpaceOnUse" x1="672.1" y1="277.0" x2="774.7" y2="454.6"><stop offset="0.0000" stop-color="#282828"/><stop offset="0.0019" stop-color="#303030"/><stop offset="0.0076" stop-color="#393939"/><stop offset="0.0170" stop-color="#414141"/><stop offset="0.0302" stop-color="#4a4a4a"/><stop offset="0.0468" stop-color="#525252"/><stop offset="0.0670" stop-color="#595959"/><stop offset="0.0904" stop-color="#616161"/><stop offset="0.1170" stop-color="#6e6e6e"/><stop offset="0.1464" stop-color="#7a7a7a"/><stop offset="0.1786" stop-color="#858585"/><stop offset="0.2132" stop-color="#8f8f8f"/><stop offset="0.2500" stop-color="#989898"/><stop offset="0.2887" stop-color="#a0a0a0"/><stop offset="0.3290" stop-color="#a6a6a6"/><stop offset="0.3706" stop-color="#aaaaaa"/><stop offset="0.4132" stop-color="#aaaaaa"/><stop offset="0.4564" stop-color="#aaaaaa"/><stop offset="0.5000" stop-color="#aaaaaa"/><stop offset="0.5436" stop-color="#aaaaaa"/><stop offset="0.5868" stop-color="#aaaaaa"/><stop offset="0.6294" stop-color="#aaaaaa"/><stop offset="0.6710" stop-color="#a6a6a6"/><stop offset="0.7113" stop-color="#a0a0a0"/><stop offset="0.7500" stop-color="#989898"/><stop offset="0.7868" stop-color="#8f8f8f"/><stop offset="0.8214" stop-color="#858585"/><stop offset="0.8536" stop-color="#7a7a7a"/><stop offset="0.8830" stop-color="#6e6e6e"/><stop offset="0.9096" stop-color="#616161"/><stop offset="0.9330" stop-color="#5a5a5a"/><stop offset="0.9532" stop-color="#525252"/><stop offset="0.9698" stop-color="#4a4a4a"/><stop offset="0.9830" stop-color="#414141"/><stop offset="0.9924" stop-color="#393939"/><stop offset="0.9981" stop-color="#303030"/><stop offset="1.0000" stop-color="#282828"/></linearGradient></defs>
<path d="M341,267.4 L983,637.9" stroke="#d45a52" stroke-width="1.6" fill="none"/>
<path d="M1133.2,454.7 L1241.3,198.6 L1241.3,248.7 L1133.2,504.8Z" fill="#2e2e2e" stroke="#121212" stroke-width="1.75" stroke-linejoin="round" stroke-linecap="round" /><path d="M1241.3,198.6 L1241.7,197.5 L1242.1,196.3 L1242.5,195.1 L1242.8,194.0 L1243.1,192.8 L1243.3,191.6 L1243.5,190.4 L1243.6,189.2 L1243.7,188.0 L1243.7,186.8 L1243.7,236.9 L1243.7,238.1 L1243.6,239.3 L1243.5,240.5 L1243.3,241.7 L1243.1,242.9 L1242.8,244.1 L1242.5,245.2 L1242.1,246.4 L1241.7,247.6 L1241.3,248.7Z" fill="url(#gAP)" stroke="#121212" stroke-width="1.75" stroke-linejoin="round" stroke-linecap="round" /><path d="M988.2,478.1 L992.7,480.5 L997.4,482.7 L1002.4,484.7 L1007.7,486.5 L1013.1,488.1 L1018.7,489.5 L1024.5,490.6 L1030.4,491.5 L1036.4,492.1 L1042.4,492.5 L1048.5,492.7 L1054.6,492.6 L1060.7,492.3 L1066.7,491.7 L1072.6,490.9 L1078.4,489.8 L1084.0,488.5 L1089.5,487.0 L1094.8,485.2 L1099.9,483.2 L1104.7,481.1 L1109.2,478.7 L1113.4,476.2 L1117.4,473.5 L1120.9,470.7 L1124.2,467.7 L1127.0,464.6 L1129.5,461.4 L1131.5,458.0 L1133.2,454.7 L1133.2,504.8 L1131.5,508.1 L1129.5,511.5 L1127.0,514.7 L1124.2,517.8 L1120.9,520.8 L1117.4,523.6 L1113.4,526.3 L1109.2,528.8 L1104.7,531.2 L1099.9,533.3 L1094.8,535.3 L1089.5,537.1 L1084.0,538.6 L1078.4,539.9 L1072.6,541.0 L1066.7,541.8 L1060.7,542.4 L1054.6,542.7 L1048.5,542.8 L1042.4,542.6 L1036.4,542.2 L1030.4,541.6 L1024.5,540.7 L1018.7,539.6 L1013.1,538.2 L1007.7,536.6 L1002.4,534.8 L997.4,532.8 L992.7,530.6 L988.2,528.2Z" fill="url(#gBR)" stroke="#121212" stroke-width="1.75" stroke-linejoin="round" stroke-linecap="round" /><path d="M627.6,249.3 L627.8,252.0 L628.2,254.8 L628.8,257.6 L629.8,260.3 L631.0,263.1 L632.5,265.7 L634.2,268.3 L636.2,270.9 L638.4,273.4 L640.9,275.8 L643.5,278.1 L646.5,280.3 L649.6,282.5 L652.9,284.5 L652.9,334.6 L649.6,332.6 L646.5,330.4 L643.5,328.2 L640.9,325.9 L638.4,323.5 L636.2,321.0 L634.2,318.4 L632.5,315.8 L631.0,313.2 L629.8,310.4 L628.8,307.7 L628.2,304.9 L627.8,302.1 L627.6,299.4Z" fill="url(#gBL)" stroke="#121212" stroke-width="1.75" stroke-linejoin="round" stroke-linecap="round" /><path d="M988.2,478.1 L992.7,480.5 L997.4,482.7 L1002.4,484.7 L1007.7,486.5 L1013.1,488.1 L1018.7,489.5 L1024.5,490.6 L1030.4,491.5 L1036.4,492.1 L1042.4,492.5 L1048.5,492.7 L1054.6,492.6 L1060.7,492.3 L1066.7,491.7 L1072.6,490.9 L1078.4,489.8 L1084.0,488.5 L1089.5,487.0 L1094.8,485.2 L1099.9,483.2 L1104.7,481.1 L1109.2,478.7 L1113.4,476.2 L1117.4,473.5 L1120.9,470.7 L1124.2,467.7 L1127.0,464.6 L1129.5,461.4 L1131.5,458.0 L1133.2,454.7 L1241.3,198.6 L1242.5,195.3 L1243.3,191.9 L1243.7,188.5 L1243.7,185.1 L1243.3,181.7 L1242.5,178.4 L1241.3,175.0 L1239.7,171.8 L1237.7,168.6 L1235.4,165.4 L1232.6,162.4 L1229.6,159.5 L1226.2,156.7 L1222.5,154.1 L1218.4,151.6 L1214.1,149.3 L1209.6,147.1 L1204.7,145.2 L1199.7,143.4 L1194.5,141.8 L1189.1,140.5 L1183.5,139.3 L1177.8,138.4 L1172.0,137.7 L1166.2,137.3 L1160.3,137.0 L1154.4,137.0 L1148.5,137.3 L1142.7,137.7 L1136.9,138.4 L693.5,200.8 L687.6,201.8 L681.9,203.0 L676.3,204.4 L671.0,206.0 L665.8,207.9 L660.8,209.9 L656.2,212.2 L651.8,214.6 L647.7,217.3 L644.0,220.0 L640.6,223.0 L637.6,226.0 L634.9,229.2 L632.7,232.5 L630.8,235.8 L629.4,239.2 L628.4,242.7 L627.8,246.2 L627.6,249.7 L627.9,253.2 L628.6,256.7 L629.7,260.2 L631.3,263.6 L633.2,266.9 L635.6,270.1 L638.3,273.3 L641.4,276.3 L644.9,279.2 L648.8,281.9 L652.9,284.5Z" fill="#808080" stroke="#121212" stroke-width="1.75" stroke-linejoin="round" stroke-linecap="round" /><path d="M937.6,123.8 L941.8,121.7 L946.2,120.2 L951.0,119.3 L955.9,119.0 L961.1,119.2 L966.4,120.0 L971.9,121.4 L977.5,123.3 L983.1,125.8 L988.8,128.9 L994.5,132.4 L1000.2,136.4 L1005.8,140.9 L1011.2,145.9 L1016.6,151.2 L1021.7,157.0 L1026.7,163.1 L1031.4,169.4 L1035.9,176.1 L1040.1,183.0 L1044.0,190.0 L1047.5,197.2 L1050.6,204.5 L1053.4,211.8 L1055.8,219.2 L1057.8,226.5 L1059.3,233.7 L1060.4,240.8 L1061.1,247.7 L1061.3,254.4 L1061.1,260.8 L1060.4,267.0 L1059.3,272.8 L1057.8,278.2 L1055.8,283.2 L1053.4,287.8 L1050.6,292.0 L1047.5,295.6 L1044.0,298.7 L1040.1,301.3 L871.8,398.5 L867.6,400.5 L863.2,402.0 L858.4,402.9 L853.5,403.3 L848.3,403.0 L843.0,402.2 L837.5,400.9 L831.9,398.9 L826.3,396.4 L820.6,393.4 L814.9,389.9 L809.2,385.8 L803.6,381.3 L798.2,376.4 L792.8,371.0 L787.7,365.3 L782.7,359.2 L778.0,352.8 L773.5,346.2 L769.3,339.3 L765.4,332.2 L761.9,325.0 L758.8,317.8 L756.0,310.4 L753.6,303.1 L751.6,295.8 L750.1,288.5 L749.0,281.5 L748.3,274.5 L748.1,267.9 L748.3,261.4 L749.0,255.3 L750.1,249.5 L751.6,244.0 L753.6,239.0 L756.0,234.4 L758.8,230.3 L761.9,226.6 L765.4,223.5 L769.3,220.9Z" fill="url(#gCyl)"/><path d="M937.6,123.8 L940.7,122.2 L944.0,120.9 L947.4,120.0 L951.0,119.3 L954.7,119.0 L958.5,119.0 L962.4,119.4 L966.4,120.0 L970.5,121.0 L974.7,122.3 L978.9,123.9 L983.1,125.8 L987.4,128.0 L991.7,130.6 L995.9,133.4 L1000.2,136.4 L1004.4,139.8 L1008.5,143.4 L1012.6,147.2 L1016.6,151.2 L1020.5,155.5 L1024.3,160.0 L1027.9,164.6 L1031.4,169.4 L1034.8,174.4 L1038.0,179.5 L1041.1,184.7 L1044.0,190.0 L1046.6,195.4 L1049.1,200.8 L1051.4,206.3 L1053.4,211.8 L1055.2,217.3 L1056.8,222.8 L1058.2,228.3 L1059.3,233.7 L1060.2,239.0 L1060.8,244.3 L1061.2,249.4 L1061.3,254.4" stroke="#121212" stroke-width="1.75" stroke-linejoin="round" stroke-linecap="round" fill="none"/><path d="M893.1,351.6 L1061.3,254.4 L1061.3,326.0 L893.1,423.2Z" fill="#808080" stroke="#121212" stroke-width="1.75" stroke-linejoin="round" stroke-linecap="round" /><path d="M652.9,284.5 L748.1,339.5 L748.1,267.9 L893.1,351.6 L893.1,423.2 L988.2,478.1 L988.2,528.2 L652.9,334.6Z" fill="#808080"/><path d="M893.1,351.6 L893.1,423.2 L988.2,478.1" stroke="#121212" stroke-width="1.75" stroke-linejoin="round" stroke-linecap="round" fill="none"/><path d="M988.2,478.1 L988.2,528.2 L652.9,334.6 L652.9,284.5 L730.8,329.5" stroke="#121212" stroke-width="1.75" stroke-linejoin="round" stroke-linecap="round" fill="none"/><path d="M769.3,220.9 L773.5,218.9 L778.0,217.4 L782.7,216.5 L787.7,216.1 L792.8,216.4 L798.2,217.2 L803.6,218.5 L809.2,220.5 L814.9,223.0 L820.6,226.0 L826.3,229.5 L831.9,233.6 L837.5,238.1 L843.0,243.0 L848.3,248.4 L853.5,254.1 L858.4,260.2 L863.2,266.6 L867.6,273.2 L871.8,280.1 L875.7,287.2 L879.2,294.4 L882.4,301.6 L885.2,309.0 L887.5,316.3 L889.5,323.6 L891.1,330.9 L892.2,337.9 L892.8,344.9 L893.1,351.6 L892.8,358.0 L892.2,364.1 L891.1,369.9 L889.5,375.4 L887.5,380.4 L885.2,385.0 L882.4,389.1 L879.2,392.8 L875.7,395.9 L871.8,398.5 L774.7,454.6 L770.5,456.6 L766.0,458.1 L761.3,459.0 L756.3,459.4 L751.1,459.1 L745.8,458.3 L740.3,457.0 L734.7,455.0 L729.1,452.5 L723.4,449.5 L717.7,446.0 L712.1,441.9 L706.5,437.4 L701.0,432.5 L695.7,427.1 L690.5,421.4 L685.5,415.3 L680.8,408.9 L676.3,402.3 L672.1,395.4 L668.3,388.3 L664.8,381.1 L661.6,373.9 L658.8,366.5 L656.4,359.2 L654.5,351.9 L652.9,344.6 L651.8,337.6 L651.1,330.6 L650.9,323.9 L651.1,317.5 L651.8,311.4 L652.9,305.6 L654.5,300.1 L656.4,295.1 L658.8,290.5 L661.6,286.4 L664.8,282.7 L668.3,279.6 L672.1,277.0Z" fill="url(#gCyl)"/><path d="M871.8,398.5 L874.3,396.9 L876.6,395.1 L878.8,393.2 L880.8,391.0 L882.7,388.6 L884.5,386.1 L886.1,383.3 L887.5,380.4 L888.8,377.3 L889.9,374.0 L890.9,370.6 L891.7,367.1 L892.3,363.4 L892.7,359.6 L893.0,355.6 L893.1,351.6" stroke="#121212" stroke-width="1.75" stroke-linejoin="round" stroke-linecap="round" fill="none"/><path d="M672.1,277.0 L937.6,123.8" stroke="#262626" stroke-width="1" fill="none"/><path d="M774.7,454.6 L871.8,398.5" stroke="#262626" stroke-width="1" fill="none"/><path d="M795.9,407.6 L893.1,351.6" stroke="#121212" stroke-width="1.75" stroke-linejoin="round" stroke-linecap="round" fill="none"/><path d="M795.9,407.6 L795.6,400.2 L794.8,392.5 L793.4,384.6 L791.5,376.5 L789.1,368.4 L786.2,360.2 L782.8,352.1 L778.9,344.1 L774.7,336.2 L770.0,328.6 L765.0,321.2 L759.6,314.2 L754.0,307.6 L748.2,301.5 L742.2,295.8 L736.0,290.6 L729.7,286.1 L723.4,282.1 L717.1,278.8 L710.8,276.1 L704.6,274.1 L698.6,272.8 L692.8,272.3 L687.2,272.4 L681.8,273.2 L676.8,274.8 L672.1,277.0 L667.9,279.9 L664.0,283.5 L660.6,287.7 L657.7,292.5 L655.3,297.8 L653.4,303.7 L652.0,310.1 L651.2,316.8 L650.9,323.9 L651.2,331.4 L652.0,339.1 L653.4,347.0 L655.3,355.1 L657.7,363.2 L660.6,371.4 L664.0,379.5 L667.9,387.5 L672.1,395.4 L676.8,403.0 L681.8,410.4 L687.2,417.4 L692.8,424.0 L698.6,430.1 L704.6,435.8 L710.8,441.0 L717.1,445.5 L723.4,449.5 L729.7,452.8 L736.0,455.5 L742.2,457.5 L748.2,458.8 L754.0,459.3 L759.6,459.2 L765.0,458.4 L770.0,456.8 L774.7,454.6 L778.9,451.7 L782.8,448.1 L786.2,443.9 L789.1,439.1 L791.5,433.8 L793.4,427.9 L794.8,421.5 L795.6,414.8 L795.9,407.6Z" fill="#818181" stroke="#121212" stroke-width="1.8"/><path d="M656.2,295.6 L658.2,291.6 L660.5,287.8 L663.2,284.5 L666.1,281.5 L669.3,278.9 L672.7,276.7 L676.4,275.0 L680.2,273.6 L684.3,272.7 L688.6,272.3 L693.1,272.3 L697.7,272.7 L702.4,273.6 L707.2,274.9 L712.1,276.6 L717.0,278.7 L722.0,281.3 L726.9,284.2 L731.9,287.6 L736.8,291.3 L741.7,295.4 L746.4,299.7 L751.1,304.4 L755.6,309.4 L760.0,314.7 L764.2,320.2 L768.2,325.9 L772.0,331.8 L775.6,337.9 L778.9,344.1 L782.0,350.4 L784.8,356.7 L787.3,363.1 L789.5,369.6 L791.4,376.0 L792.9,382.3 L794.2,388.6 L795.1,394.8 L795.7,400.8 L795.9,406.7 L795.8,412.4 L795.3,417.8 L794.5,423.0 L793.4,428.0 L791.9,432.6 L790.2,437.0 L788.1,441.0 L785.7,444.6 L783.0,447.9 L780.0,450.8 L776.8,453.3 L773.3,455.3 L769.5,457.0 L765.6,458.2 L761.5,459.0 L757.1,459.4 L752.7,459.3 L748.0,458.7 L743.3,457.8 L738.5,456.4" fill="none" stroke="#d8246c" stroke-width="1.5" stroke-dasharray="3.5 3.5"/>
<text x="570.2" y="327.1" font-family="Liberation Sans, sans-serif" font-size="26" fill="#b3aa30" fill-opacity="0.8" textLength="185.5" lengthAdjust="spacingAndGlyphs">Mechnexus.com</text>
<path d="M759.2,386.4 L759.0,382.8 L758.6,379.0 L757.9,375.1 L757.0,371.1 L755.8,367.1 L754.4,363.0 L752.7,359.0 L750.8,355.1 L748.7,351.2 L746.4,347.4 L743.9,343.8 L741.3,340.4 L738.5,337.1 L735.6,334.1 L732.7,331.3 L729.6,328.7 L726.5,326.5 L723.4,324.5 L720.3,322.9 L717.2,321.5 L714.1,320.6 L711.2,319.9 L708.3,319.6 L705.5,319.7 L702.9,320.1 L700.4,320.9 L698.1,322.0 L696.0,323.4 L694.1,325.2 L692.4,327.3 L691.0,329.6 L689.8,332.3 L688.9,335.2 L688.2,338.3 L687.8,341.6 L687.6,345.2 L687.8,348.8 L688.2,352.6 L688.9,356.5 L689.8,360.5 L691.0,364.5 L692.4,368.6 L694.1,372.6 L696.0,376.5 L698.1,380.4 L700.4,384.2 L702.9,387.8 L705.5,391.2 L708.3,394.5 L711.2,397.5 L714.1,400.3 L717.2,402.9 L720.3,405.1 L723.4,407.1 L726.5,408.7 L729.6,410.1 L732.7,411.0 L735.6,411.7 L738.5,412.0 L741.3,411.9 L743.9,411.5 L746.4,410.7 L748.7,409.6 L750.8,408.2 L752.7,406.4 L754.4,404.3 L755.8,402.0 L757.0,399.3 L757.9,396.4 L758.6,393.3 L759.0,390.0Z" fill="none" stroke="#10f210" stroke-width="2.1"/>
<path d="M723.5,34 V636" stroke="#80ff80" stroke-width="2.1" fill="none"/>
<circle cx="723.3" cy="488.6" r="4.2" fill="#1e78ff"/>
<path d="M723.5,480 V487.5" stroke="#80ff80" stroke-width="2.1" fill="none"/><path d="M724.2,488.5 L731,492.4" stroke="#d45a52" stroke-width="1.6" fill="none"/>

<path d="M616.6,311.9 L758.9,383.4" stroke="#ffff14" stroke-width="1.9" fill="none"/>
<path d="M758.9,383.4 l-9.5,-1.6 l2.4,-4.8 Z M688,347.8 l9.5,1.6 l-2.4,4.8 Z" fill="#ffff14"/>
<text transform="matrix(0.864,0.4345,0.056,1.03,568.2,293.8)" font-family="Liberation Sans, sans-serif" font-size="13" fill="#ffff28" textLength="51.5" lengthAdjust="spacingAndGlyphs">Ø16 mm</text>
<circle cx="722.9" cy="366.4" r="2.6" fill="#2fd82f"/>
</svg></div>
</body></html>
